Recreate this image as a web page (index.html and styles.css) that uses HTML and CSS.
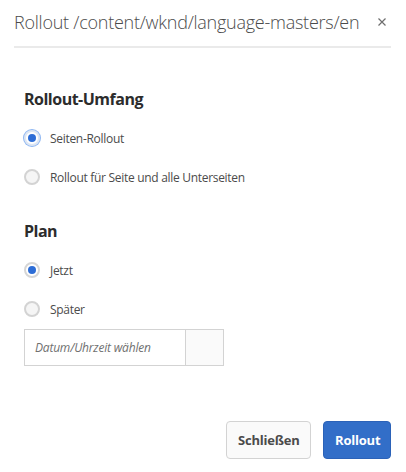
FILE: index.html
```html
<!DOCTYPE html>
<html lang="de">
<head>
<meta charset="utf-8">
<link rel="stylesheet" href="styles.css">
</head>
<body>
<div class="dialog">
  <header class="dlg-header">
    <h1 class="dlg-title">Rollout /content/wknd/language-masters/en</h1>
    <button class="dlg-close" aria-label="Schließen">
      <svg width="8" height="8" viewBox="0 0 8 8"><path d="M0.5 0.5L7.5 7.5M7.5 0.5L0.5 7.5" stroke="#6e6e6e" stroke-width="1.2" fill="none"/></svg>
    </button>
  </header>
  <div class="dlg-body">
    <h2 class="section-title first">Rollout-Umfang</h2>
    <label class="radio"><span class="radio-dot checked focus"></span><span>Seiten-Rollout</span></label>
    <label class="radio"><span class="radio-dot"></span><span>Rollout für Seite und alle Unterseiten</span></label>
    <h2 class="section-title">Plan</h2>
    <label class="radio"><span class="radio-dot checked"></span><span>Jetzt</span></label>
    <label class="radio"><span class="radio-dot"></span><span>Später</span></label>
    <div class="datepicker">
      <span class="dp-input">Datum/Uhrzeit wählen</span>
      <span class="dp-btn"></span>
    </div>
  </div>
  <footer class="dlg-footer">
    <button class="btn btn-secondary">Schließen</button>
    <button class="btn btn-primary">Rollout</button>
  </footer>
</div>
</body>
</html>
```
FILE: styles.css
```css
html, body {
  margin: 0;
  padding: 0;
  background: #ffffff;
}
body {
  font-family: "Open Sans", "Noto Sans", sans-serif;
  color: #4b4b4b;
  width: 406px;
  height: 472px;
}
.dialog {
  display: flex;
  flex-direction: column;
  height: 472px;
}
.dlg-header {
  display: flex;
  align-items: center;
  justify-content: space-between;
  margin: 0 15px 0 14px;
  height: 46px;
  border-bottom: 2px solid #eaeaea;
}
.dlg-title {
  margin: 0;
  font-size: 18px;
  font-weight: 300;
  color: #4b4b4b;
  white-space: nowrap;
  letter-spacing: -0.25px;
  padding-bottom: 2px;
}
.dlg-close {
  border: 0;
  background: none;
  padding: 0;
  width: 16px;
  height: 16px;
  display: flex;
  align-items: center;
  justify-content: center;
  margin-right: 1px;
  margin-bottom: 2px;
}
.dlg-body {
  padding: 0 24px;
  flex: 1;
}
.section-title {
  margin: 0;
  font-size: 16px;
  font-weight: 700;
  color: #2c2c2c;
  line-height: 20px;
  letter-spacing: -0.5px;
  margin-top: 33px;
  margin-bottom: 18px;
}
.section-title.first {
  margin-top: 41px;
}
.radio {
  display: flex;
  align-items: center;
  gap: 10px;
  height: 22px;
  font-size: 12px;
  letter-spacing: -0.3px;
  color: #4b4b4b;
  margin-bottom: 17px;
}
.radio-dot {
  box-sizing: border-box;
  width: 16px;
  height: 16px;
  border-radius: 50%;
  border: 2px solid #d3d3d3;
  background: #f5f5f5;
  position: relative;
  flex: none;
}
.radio-dot.checked {
  border: 2px solid #d6d6d6;
  background: #ffffff;
}
.radio-dot.checked::after {
  content: "";
  position: absolute;
  left: 2px;
  top: 2px;
  width: 8px;
  height: 8px;
  border-radius: 50%;
  background: #2d6dd6;
}
.radio-dot.focus {
  box-shadow: 0 0 0 1px #8fb7f2;
  border-color: #dde6f3;
}
.datepicker {
  display: flex;
  width: 200px;
  height: 37px;
  box-sizing: border-box;
  border: 1px solid #d3d3d3;
  margin-top: -8px;
}
.dp-input {
  flex: 1;
  display: flex;
  align-items: center;
  padding-left: 10px;
  font-size: 12px;
  letter-spacing: -0.2px;
  font-style: italic;
  color: #707070;
  background: #ffffff;
}
.dp-btn {
  width: 37px;
  border-left: 1px solid #d3d3d3;
  background: #fafafa;
}
.dlg-footer {
  display: flex;
  justify-content: flex-end;
  gap: 12px;
  padding: 0 15px 13px 0;
}
.btn {
  font-family: "Open Sans", "Noto Sans", sans-serif;
  font-size: 13px;
  font-weight: 700;
  height: 38px;
  border-radius: 4px;
  padding: 0 11px;
  box-sizing: border-box;
  letter-spacing: -0.2px;
}
.btn-secondary {
  background: #fafafa;
  border: 1px solid #d3d3d3;
  color: #4b4b4b;
  width: 85px;
}
.btn-primary {
  background: #326ec8;
  border: 1px solid #2b62b8;
  color: #ffffff;
  width: 68px;
}
```
